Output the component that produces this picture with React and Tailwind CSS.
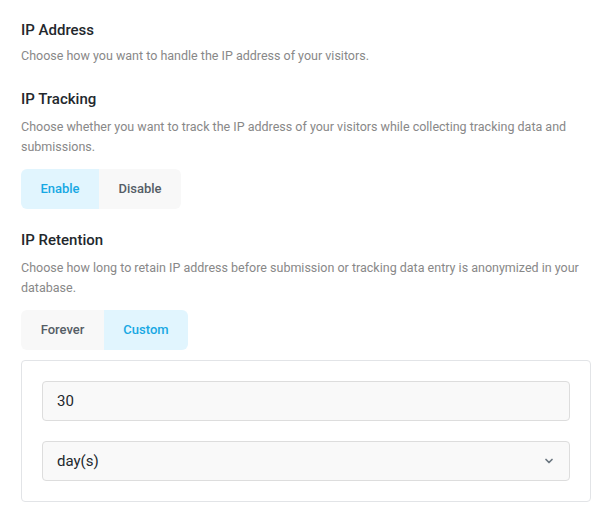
import { ChevronDown } from "lucide-react";

const Toggle = ({ options, active }) => (
  <div className="flex">
    {options.map((opt, i) => (
      <button
        key={opt.label}
        className={`h-10 text-[13px] font-medium ${opt.w} ${
          i === 0 ? "rounded-l-md" : "rounded-r-md"
        } ${
          opt.label === active
            ? "bg-[#e1f5fe] text-[#17a8e3]"
            : "bg-[#f8f8f8] text-[#555d66]"
        }`}
      >
        {opt.label}
      </button>
    ))}
  </div>
);

const App = () => {
  return (
    <div className="pl-[21px] pr-[19px] pt-[20px] font-['Roboto',sans-serif] bg-white min-h-[518px]">
      {/* IP Address */}
      <h2 className="text-[15px] font-medium text-[#23282d] leading-5">IP Address</h2>
      <p className="mt-[6px] text-[12.5px] leading-5 text-[#888]">
        Choose how you want to handle the IP address of your visitors.
      </p>

      {/* IP Tracking */}
      <h2 className="mt-[23px] text-[15px] font-medium text-[#23282d] leading-5">IP Tracking</h2>
      <p className="mt-[8px] text-[12.5px] leading-5 text-[#888]">
        Choose whether you want to track the IP address of your visitors while collecting tracking data and submissions.
      </p>
      <div className="mt-[12px]">
        <Toggle
          active="Enable"
          options={[
            { label: "Enable", w: "w-[78px]" },
            { label: "Disable", w: "w-[82px]" },
          ]}
        />
      </div>

      {/* IP Retention */}
      <h2 className="mt-[21px] text-[15px] font-medium text-[#23282d] leading-5">IP Retention</h2>
      <p className="mt-[8px] text-[12.5px] leading-5 text-[#888]">
        Choose how long to retain IP address before submission or tracking data entry is anonymized in your database.
      </p>
      <div className="mt-[12px]">
        <Toggle
          active="Custom"
          options={[
            { label: "Forever", w: "w-[83px]" },
            { label: "Custom", w: "w-[84px]" },
          ]}
        />
      </div>

      <div className="mt-[10px] border border-[#e2e4e7] rounded-[4px] p-[20px] flex flex-col gap-[20px]">
        <input
          defaultValue="30"
          className="h-10 w-full rounded-[4px] border border-[#ddd] bg-[#f9f9f9] px-[14px] text-[15px] text-[#23282d] outline-none"
        />
        <div className="relative">
          <select className="h-10 w-full appearance-none rounded-[4px] border border-[#ddd] bg-[#f9f9f9] px-[14px] text-[15px] text-[#23282d] outline-none">
            <option>day(s)</option>
          </select>
          <ChevronDown
            size={12}
            strokeWidth={3.5}
            className="absolute right-[15px] top-[14px] text-[#6c7781] pointer-events-none"
          />
        </div>
      </div>
    </div>
  );
};

export default App;
